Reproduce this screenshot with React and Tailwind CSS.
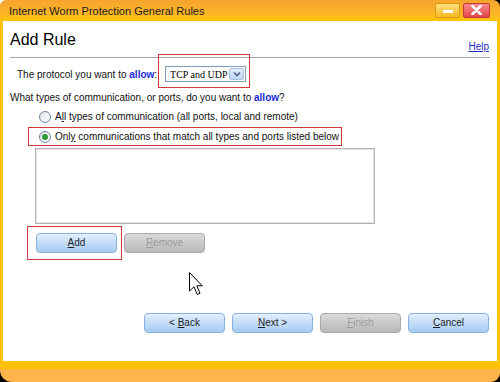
import React from "react";

function Btn({ pre = "", u, rest, disabled }) {
  const base =
    "w-[81px] h-[20px] rounded-[4px] border flex items-center justify-center text-[10px] leading-none whitespace-pre";
  const look = disabled
    ? "border-[#a9a9a9] bg-gradient-to-b from-[#dadada] to-[#b9b9b9] text-[#9c9c9c]"
    : "border-[#8cb1dc] bg-gradient-to-b from-[#e2eefc] to-[#a6ccf2] text-[#1e1e1e]";
  return (
    <div className={`${base} ${look}`}>
      {pre}
      <span className="underline">{u}</span>
      {rest}
    </div>
  );
}

function Radio({ checked }) {
  return (
    <span className="w-[12px] h-[12px] rounded-full border border-[#6f86a6] bg-gradient-to-br from-[#dfe3e8] to-white flex items-center justify-center shrink-0">
      {checked && <span className="w-[6px] h-[6px] rounded-full bg-[#2d9a3a]" />}
    </span>
  );
}

export default function App() {
  return (
    <div className="relative w-[500px] h-[382px] bg-black overflow-hidden font-['Liberation_Sans',Arial,sans-serif] text-[10px] text-[#111]">
      <div className="absolute top-0 left-0 w-[12px] h-[12px] bg-white" />
      <div className="relative h-full flex flex-col rounded-tl-[6px] rounded-tr-[7px] rounded-bl-[12px] rounded-br-[9px] overflow-hidden">
        {/* title bar */}
        <div className="h-[21px] shrink-0 bg-gradient-to-b from-[#f6a42c] via-[#f9b12a] to-[#ffc400] flex items-center pl-[9px] pr-[10px]">
          <span className="text-[11px] text-[#1c1c1c] mt-[2px]">Internet Worm Protection General Rules</span>
          <div className="ml-auto flex gap-[3px] mt-[-1px]">
            <div className="w-[25px] h-[15px] rounded-[2px] border border-[#d29c10] bg-gradient-to-b from-[#ffe07a] to-[#f4b818] flex items-center justify-center">
              <span className="w-[10px] h-[3px] bg-white rounded-[1px] mt-[2px]" />
            </div>
            <div className="w-[27px] h-[15px] rounded-[2px] border border-[#c8383c] bg-gradient-to-b from-[#f88a8c] to-[#e2444a] flex items-center justify-center">
              <svg width="11" height="10" viewBox="0 0 11 10">
                <path d="M1.5 1 L9.5 9 M9.5 1 L1.5 9" stroke="white" strokeWidth="2.6" strokeLinecap="round" />
              </svg>
            </div>
          </div>
        </div>

        {/* body */}
        <div className="flex-1 flex">
          <div className="w-[3px] bg-[#ffc300]" />
          <div className="relative flex-1 bg-white flex flex-col">
            <div className="h-[27px] mt-[9px] ml-[7px] mr-[8px] flex justify-between">
              <span className="text-[16px] leading-[20px] text-[#000]">Add Rule</span>
              <span className="self-end mb-[4px] leading-[13px] text-[#1f2fbf] underline">Help</span>
            </div>
            <div className="h-px bg-[#a4a4a4] ml-[7px] mr-[7px]" />

            <div className="mt-[8px] h-[16px] flex items-center ml-[14px]">
              <span>
                The protocol you want to <b className="text-[#1b2ad6]">allow</b>:
              </span>
              <div className="ml-[8px] w-[81px] h-[16px] border border-[#7f9db9] bg-white flex items-center">
                <span className="pl-[4px] font-['Liberation_Serif',serif] text-[10px] text-black whitespace-nowrap">TCP and UDP</span>
                <div className="ml-auto mr-px w-[15px] h-[12px] rounded-[2px] border border-[#a9bfe0] bg-gradient-to-b from-[#e4eefc] to-[#c0d6f3] flex items-center justify-center">
                  <svg width="8" height="6" viewBox="0 0 8 6">
                    <path d="M1 1.5 L4 4.5 L7 1.5" stroke="#4d6185" strokeWidth="1.6" fill="none" />
                  </svg>
                </div>
              </div>
            </div>

            <div className="mt-[9px] ml-[7px] leading-[13px]">
              What types of communication, or ports, do you want to <b className="text-[#1b2ad6]">allow</b>?
            </div>

            <div className="mt-[6px] ml-[36px] h-[13px] flex items-center gap-[4px]">
              <Radio />
              <span>
                A<span className="underline">l</span>l types of communication (all ports, local and remote)
              </span>
            </div>
            <div className="mt-[7px] ml-[36px] h-[13px] flex items-center gap-[4px]">
              <Radio checked />
              <span>
                Onl<span className="underline">y</span> communications that match all types and ports listed below
              </span>
            </div>

            <div className="mt-[5px] ml-[32px] w-[340px] h-[76px] border border-[#b4b4b4] shadow-[inset_0_0_0_1px_#e4e4e4] bg-white" />

            <div className="mt-[9px] ml-[33px] flex gap-[7px]">
              <Btn u="A" rest="dd" />
              <Btn u="R" rest="emove" disabled />
            </div>

            <div className="mt-auto mb-[28px] mr-[8px] flex justify-end gap-[7px]">
              <Btn pre="< " u="B" rest="ack" />
              <Btn u="N" rest="ext >" />
              <Btn u="F" rest="inish" disabled />
              <Btn u="C" rest="ancel" />
            </div>

            {/* annotation boxes */}
            <div className="absolute left-[155px] top-[33px] w-[92px] h-[34px] border border-[#d0383c]" />
            <div className="absolute left-[25px] top-[106px] w-[314px] h-[19px] border border-[#d0383c]" />
            <div className="absolute left-[24px] top-[205px] w-[95px] h-[34px] border border-[#d0383c]" />

            {/* mouse cursor */}
            <svg className="absolute left-[186px] top-[251px]" width="14" height="24" viewBox="0 0 14 24">
              <path
                d="M0.5 0.5 L0.5 19 L5 14.8 L8.3 22.5 L11 21.3 L7.8 13.8 L13.3 13.8 Z"
                fill="white"
                stroke="black"
                strokeWidth="1"
                strokeLinejoin="miter"
              />
            </svg>
          </div>
          <div className="w-[3px] bg-[#ffc300]" />
        </div>

        {/* bottom frame */}
        <div className="h-[8px] shrink-0 bg-[#ffc100]" />
        <div className="h-[13px] shrink-0 bg-[#ffb44c]" />
      </div>
    </div>
  );
}
